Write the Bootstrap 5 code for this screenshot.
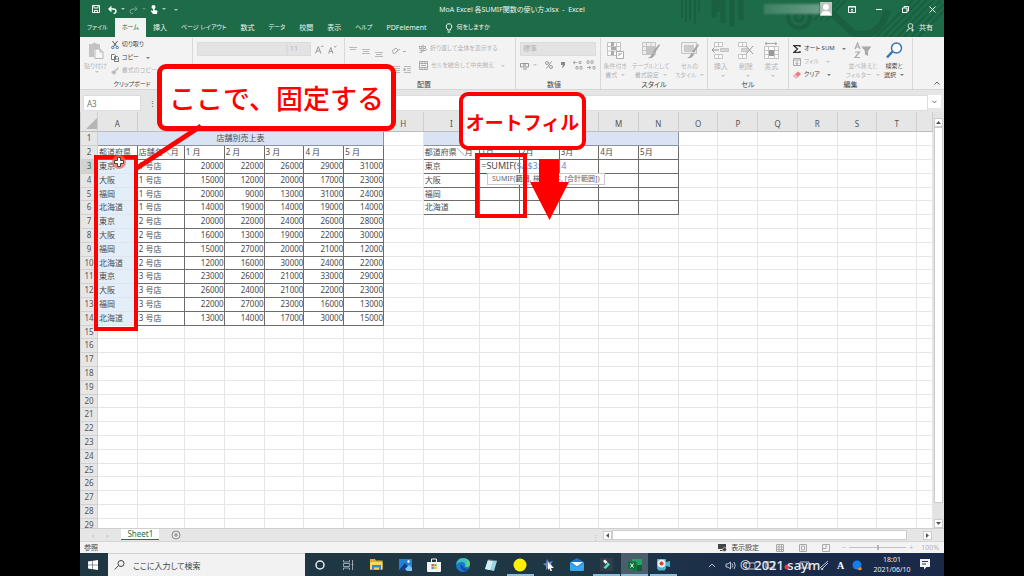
<!DOCTYPE html>
<html lang="ja">
<head>
<meta charset="utf-8">
<meta name="viewport" content="width=device-width, initial-scale=1">
<title>MoA Excel 各SUMIF関数の使い方.xlsx - Excel</title>
<link href="https://cdn.jsdelivr.net/npm/bootstrap@5.3.0/dist/css/bootstrap.min.css" rel="stylesheet">
<script src="https://cdn.jsdelivr.net/npm/bootstrap@5.3.0/dist/js/bootstrap.bundle.min.js"></script>
<style>
  body { background:#000; font-family:"Noto Sans","Noto Sans CJK JP",sans-serif; font-size:7px; line-height:9px; color:#444; padding:0 80px; overflow:hidden; }
  button { border:0; background:none; padding:0; color:inherit; font:inherit; white-space:nowrap; }
  a { color:inherit; text-decoration:none; }
  svg { display:block; flex:none; }
  .ui { font-feature-settings:"palt"; }
  .dim { color:#b4b4b4; }
  .caret::after { content:""; display:inline-block; border:2px solid transparent; border-top-color:currentColor; border-bottom:0; margin-left:4px; vertical-align:1px; opacity:.7; }
  .small-lbl { font-size:6px; }

  /* title bar and tabs */
  .top { background:#1e6b48; color:#eaf3ee; }
  .top-art { right:0; top:0; width:290px; height:37px; z-index:0; }
  .title-row { height:18px; display:grid; grid-template-columns:1fr auto 1fr; }
  .redo { opacity:.4; }
  .user-blur { width:56px; height:10px; background:linear-gradient(90deg,#3d8062,#6b9d86); filter:blur(1px); }
  .win-btns { display:flex; align-items:center; gap:20px; margin-left:16px; }
  .tabs { height:19px; }
  .tabs a { padding:0 7px; line-height:19px; white-space:nowrap; }
  .tabs a.on { background:#f3f3f3; color:#1e6b48; }

  /* ribbon */
  .ribbon { background:#f3f3f3; height:53px; display:grid; grid-template-columns:113fr 152fr 171fr 85fr 107fr 81fr 124fr 31fr; border-bottom:1px solid #d5d5d5; }
  .grp { position:relative; border-right:1px solid #d8d8d8; margin:1px 0; min-width:0; display:flex; flex-direction:column; }
  .grp:last-child { border:0; }
  .grp-body { height:42px; }
  .grp-name { height:9px; text-align:center; color:#444; }
  .big { display:flex; flex-direction:column; align-items:center; line-height:9px; }
  .big svg { margin-bottom:3px; }
  .row13 { height:13px; display:flex; align-items:center; gap:3px; }
  .combo { appearance:none; border:1px solid #dcdcdc; background:#e3e3e3; color:#b4b4b4; height:14px; font-size:7px; padding:0 2px; line-height:12px; }
  .combo-font { width:90px; }
  .combo-size { width:24px; }

  /* formula bar */
  .fbar { background:#e6e6e6; height:22px; padding:5px 3px 0; }
  .fbar input { border:1px solid #ddd; background:#fff; height:16px; font-size:8px; padding:0 3px; color:#777; border-radius:0; }
  .namebox { width:58px; }
  .fgap { width:48px; }

  /* sheet */
  .sheet-area { background:#fff; height:416px; overflow:hidden; }
  .sheet { table-layout:fixed; width:100%; border-collapse:collapse; font-size:8px; line-height:10px; color:#4a4a4a; }
  .sheet th { font-weight:400; text-align:center; padding:0; background:#e6e6e6; border:1px solid #d0d0d0; border-top:0; color:#555; overflow:hidden; }
  .sheet thead tr { height:19px; }
  .sheet thead th { padding-top:5px; border-color:#e6e6e6 #cfcfcf #bdbdbd; }
  .sheet tbody tr { height:14px; }
  .sheet tbody tr:nth-child(5n) { height:13px; }
  .sheet td { padding:0 1px; border:1px solid #e6e6e6; white-space:nowrap; height:inherit; }
  .sheet td.bx { border-color:#6c6c6c; }
  .sheet td.num { text-align:right; padding:0; }
  .sheet td.cap { background:#dae3f3; text-align:center; border-color:#8c93a3; }
  .sheet td.sel { background:#e4eef8; border-color:#dbe6f0; border-right-color:#6c6c6c; }
  .sheet td.march { border-bottom:1px dashed #217346; }
  .sheet th.cur { background:#d2d2d2; color:#217346; }
  .sheet td.edit { font-size:9px; overflow:visible; border-bottom-color:#217346; }
  .edit span { color:#5b8bc9; }
  .vbar { width:11px; background:#e3e3e3; padding:6px 1px 0; }
  .sb { width:9px; height:9px; background:#fff; border:1px solid #ccc; display:grid; place-items:center; flex:none; }
  .thumb { background:#fff; border:1px solid #ccc; }

  /* bottom bars */
  .sheetbar { height:13px; background:#e6e6e6; border-top:1px solid #cfcfcf; }
  .sheetbar .tab1 { margin-left:13px; background:#fff; color:#217346; font-size:8px; line-height:10px; height:11px; width:38px; text-align:center; border-bottom:1px solid #217346; }
  .hbar { width:39%; }
  .hbar .thumb { height:10px; }
  .status { height:12px; background:#f3f3f3; border-top:1px solid #d5d5d5; padding:0 5px 0 4px; }
  .status input { appearance:none; width:57px; height:1px; background:#c2c2c2; margin:0 3px; }
  .status input::-webkit-slider-thumb { appearance:none; width:2px; height:5px; background:#b4b4b4; }
  .zoom-out { margin-left:11px; }
  .taskbar { height:23px; background:linear-gradient(90deg,#1f3743 0%,#1f3644 60%,#1a2c4b 80%,#1a2947 100%); color:#e8edf0; }
  .start { width:28px; }
  .find { width:197px; background:#f2f2f2; border-top:1px solid #d0d0d0; padding-left:6px; gap:8px; color:#444; }
  .find input { border:0; background:none; outline:0; padding:0; font-size:8px; width:150px; font-feature-settings:"palt"; }
  .find input::placeholder { color:#444; opacity:1; }
  .apps { width:372px; padding-left:1px; justify-content:space-between; }
  .apps button { width:27px; height:23px; display:grid; place-items:center; border-bottom:2px solid transparent; border-top:2px solid transparent; }
  .apps .run { border-bottom-color:#8dbcdc; }
  .apps .act { background:#4a5f6b; border-top-color:#4a5f6b; }
  .clock { width:40px; line-height:10px; margin-left:6px; text-align:center; }
  .tray { padding-right:13px; }

  /* annotations lying over the window */
  .note { position:absolute; background:#fff; border:4px solid #f00; border-radius:9px; color:#f00; font-family:"Noto Sans CJK JP",sans-serif; font-weight:700; display:flex; align-items:center; justify-content:center; white-space:nowrap; z-index:5; }
  .note-a { left:77px; top:64px; width:239px; height:67px; font-size:27px; font-weight:500; border-width:5px; }
  .note-b { left:379px; top:92px; width:127px; height:58px; font-size:19px; }
  .frame { position:absolute; border:4px solid #f00; z-index:4; }
  .frame-a { left:14px; top:155px; width:44px; height:176px; }
  .frame-b { left:395px; top:153px; width:52px; height:65px; }
  .marks { position:absolute; left:0; top:0; z-index:6; pointer-events:none; }
  .tip { position:absolute; left:407px; top:173px; height:12px; line-height:10px; background:#fff; border:1px solid #c8c8c8; color:#666; padding:0 4px; z-index:3; white-space:nowrap; }
  .credit { position:absolute; left:660px; bottom:3px; font-size:13px; line-height:15px; font-weight:500; color:#e9edf2; z-index:7; white-space:nowrap; }
</style>
</head>
<body>
<div class="position-relative d-flex flex-column min-vh-100">

  <header class="top position-relative ui">
    <svg class="top-art position-absolute" viewBox="0 0 290 37" fill="none" stroke="#1a6040">
      <path stroke-width="2" d="M28 0V18M32 0V22M36 0V20M41 0V24M45 0V12"/>
      <path stroke-width="5" d="M60 0V18M69 0V23M78 0V27M87 0V20M64 0V12"/>
      <circle cx="145" cy="17" r="11" stroke-width="4"/><circle cx="145" cy="17" r="4" stroke-width="3"/>
      <path stroke-width="7" d="M168 4l30 28q16 8 30-8l6-14"/>
      <path stroke-width="2" d="M160 20l20-20M166 20l20-20M172 20l20-20M222 37l37-37M229 37l37-37M236 37l37-37M243 37l37-37M250 37l37-37M257 37l33-33M264 37l26-26"/>
    </svg>
    <div class="title-row position-relative">
      <div class="d-flex align-items-center ps-2 ms-1">
        <button aria-label="保存"><svg width="8" height="8" viewBox="0 0 8 8" fill="none" stroke="#fff"><path d="M.5.5h7v7h-7zM2 .5v2.500h4v-2.500M2.500 7.500v-2h3v2"/></svg></button>
        <button class="caret ms-2" aria-label="元に戻す"><svg class="d-inline-block" width="9" height="8" viewBox="0 0 9 8" fill="none" stroke="#fff" stroke-width="1.400"><path d="M3.500.5L1 3l2.500 2.500M1 3h4.500q2.500 0 2.500 2.200T5.500 7.500"/></svg></button>
        <button class="caret ms-1 redo" aria-label="やり直し"><svg class="d-inline-block" width="9" height="8" viewBox="0 0 9 8" fill="none" stroke="#fff"><path d="M6 .5L8 3 6 5M8 3H4Q1 3 1 5.500T4 7.500"/></svg></button>
        <button class="caret ms-1" aria-label="タッチ"><svg class="d-inline-block" width="8" height="9" viewBox="0 0 8 9" fill="#fff"><circle cx="3.500" cy="2" r="2"/><path d="M3 2h1.500v3l3 .7-.5 3.300H3L.8 6 1.500 5.300 3 6z"/></svg></button>
        <button class="caret ms-1" aria-label="カスタマイズ"></button>
      </div>
      <div class="align-self-center">MoA Excel 各SUMIF関数の使い方.xlsx &nbsp;-&nbsp; Excel</div>
      <div class="d-flex align-items-center justify-content-end pe-2">
        <span class="user-blur"></span>
        <svg width="12" height="14" viewBox="0 0 12 14"><path fill="#bcc5c1" d="M0 0h12v14H0z"/><circle cx="6" cy="5" r="3" fill="#fff"/><path fill="#fff" d="M1 13q0-4 5-4t5 4z"/></svg>
        <div class="win-btns">
          <button aria-label="リボンの表示"><svg width="8" height="7" viewBox="0 0 8 7" fill="none" stroke="#fff"><path d="M.5.5h7v6h-7zM.5 1h7M4 6V3M2.800 4L4 3l1.200 1"/></svg></button>
          <button aria-label="最小化"><svg width="6" height="6" viewBox="0 0 6 6" stroke="#fff"><path d="M0 3.500h6"/></svg></button>
          <button aria-label="元のサイズ"><svg width="7" height="7" viewBox="0 0 7 7" fill="none" stroke="#fff"><path d="M.5 2h4.500v4.500H.5zM2 2V.5h4.500V5H5"/></svg></button>
          <button aria-label="閉じる"><svg width="7" height="7" viewBox="0 0 7 7" stroke="#fff"><path d="M.5.5l6 6M6.500.5l-6 6"/></svg></button>
        </div>
      </div>
    </div>
    <nav class="tabs d-flex position-relative">
      <a href="#" class="small-lbl">ファイル</a><a href="#" class="on small-lbl">ホーム</a><a href="#">挿入</a><a href="#" class="small-lbl">ページ レイアウト</a><a href="#">数式</a><a href="#" class="small-lbl">データ</a><a href="#">校閲</a><a href="#">表示</a><a href="#" class="small-lbl">ヘルプ</a><a href="#">PDFelement</a>
      <a href="#" class="d-flex align-items-center gap-1 small-lbl ms-1"><svg width="8" height="10" viewBox="0 0 8 10" fill="none" stroke="#fff"><path d="M2.500 7Q2.500 5.500 1.500 4.800 .5 1 4 .8 7.500 1 6.500 4.800 5.500 5.500 5.500 7zM2.700 9h2.600"/></svg>何をしますか</a>
      <a href="#" class="ms-auto d-flex align-items-center gap-1 me-1"><svg width="9" height="9" viewBox="0 0 9 9" fill="none" stroke="#cfe2d8"><circle cx="4.500" cy="3" r="2.400"/><path d="M.8 8.500q.3-3 3.700-3M6.500 5.500v3M5 7h3"/></svg>共有</a>
    </nav>
  </header>

  <section class="ribbon ui" aria-label="リボン">
    <div class="grp">
      <div class="grp-body d-flex gap-1 ps-1">
        <button class="big dim caret pt-1 small-lbl"><svg width="19" height="17" viewBox="0 0 19 17"><path fill="#c3c3c3" d="M3 2h3q2.500-3 5 0h3v5H8v8H3z"/><path fill="#f6f6f6" stroke="#b8b8b8" d="M9 7h5l3 3v6.500H9zM14 7v3h3"/></svg>貼り付け</button>
        <div class="small-lbl">
          <button class="row13"><svg width="8" height="8" viewBox="0 0 8 8" fill="none"><path stroke="#555" d="M1.500 0L5.500 5.500M6.500 0L2.500 5.500"/><circle cx="1.800" cy="6.500" r="1.200" stroke="#3b7dc0"/><circle cx="6.200" cy="6.500" r="1.200" stroke="#3b7dc0"/></svg>切り取り</button>
          <button class="row13 caret"><svg width="8" height="8" viewBox="0 0 8 8" fill="#fff" stroke="#777"><path d="M.5.5h3l1 1v4h-4zM3.500 2.500h3l1 1v4h-4z"/><path stroke="#3b7dc0" d="M4.500 5h2"/></svg>コピー</button>
          <button class="row13 dim"><svg width="8" height="8" viewBox="0 0 8 8" fill="#bbb"><path d="M7.500.2L8 1 5.500 4 4 2.800zM3.500 3L5.500 5 3 8 0 5z"/></svg>書式のコピー</button>
        </div>
      </div>
      <div class="grp-name small-lbl pe-2">クリップボード</div>
    </div>
    <div class="grp">
      <div class="grp-body ps-1 pt-1 dim">
        <div class="d-flex">
          <select class="combo combo-font" aria-label="フォント"><option></option></select>
          <select class="combo combo-size" aria-label="サイズ"><option>11</option></select>
          <button class="ms-1 fs-6 lh-1" aria-label="拡大"><svg width="9" height="9" viewBox="0 0 9 9" fill="none" stroke="#999"><path d="M.5 8.500L3.300 1.500 6 8.500M1.500 6h3.500M6 2L7.300.8 8.500 2"/></svg></button>
          <button class="ms-1" aria-label="縮小"><svg width="9" height="9" viewBox="0 0 9 9" fill="none" stroke="#999"><path d="M.5 8.500L2.800 2.500 5 8.500M1.300 6.500h3M6 1L7.300 2.200 8.500 1"/></svg></button>
        </div>
      </div>
    </div>
    <div class="grp">
      <div class="grp-body d-flex dim pt-1 ps-1">
        <div class="pt-1">
          <svg width="62" height="30" viewBox="0 0 62 30" fill="none" stroke="#b9b9b9"><path d="M0 1.500h8M1 3.500h6M13 3.500h8M14 5.500h6M13 7.500h8M26 6.500h8M27 8.500h6M26 10.500h8M43 20.500h8M46 22.500h5M46 24.500h5M43 26.500h8M55 20.500h7M58 22.500h4M58 24.500h4M55 26.500h7"/><path d="M43 23.500l2-1.500v3zM57 23.500l-2-1.500v3z" fill="#999"/><path d="M43 5l4-3 2 2-4 4zM45 8l6-5M54 5.500h3" stroke="#aaa"/></svg>
        </div>
        <div class="small-lbl ms-2 d-flex flex-column gap-1">
          <button class="row13"><svg width="8" height="9" viewBox="0 0 8 9" fill="none" stroke="#aaa"><path d="M0 2.500h3v2H.5zM4 .5v4h2.500v-2H4M3 6.500h3.500q1 0 1-1.500M4.500 5L3 6.500 4.500 8M.5 6h2v2.500h-2"/></svg>折り返して全体を表示する</button>
          <button class="row13 caret"><svg width="9" height="9" viewBox="0 0 9 9" fill="none" stroke="#aaa"><path d="M.5.5h8v8h-8zM.5 2.500h8M.5 6.500h8M3 0v2M6 0v2M3 7v2M6 7v2M2 4.500h5"/></svg>セルを結合して中央揃え</button>
        </div>
      </div>
      <div class="grp-name pe-2 me-1">配置</div>
    </div>
    <div class="grp">
      <div class="grp-body px-1 pt-1 dim">
        <select class="combo w-100 d-block" aria-label="表示形式"><option>標準</option></select>
        <div class="d-flex align-items-center mt-1 gap-2">
          <button class="caret" aria-label="通貨"><svg class="d-inline-block" width="9" height="8" viewBox="0 0 9 8" fill="none" stroke="#999"><path d="M.5 1.500h8v3.500h-8z"/><circle cx="4.500" cy="3.200" r="1"/><path d="M3 7h4"/></svg></button>
          <button aria-label="パーセント"><svg width="8" height="8" viewBox="0 0 8 8" fill="none" stroke="#999"><circle cx="2" cy="2" r="1.500"/><circle cx="6" cy="6" r="1.500"/><path d="M6.500.5l-5 7"/></svg></button>
          <button aria-label="桁区切り"><svg width="4" height="6" viewBox="0 0 4 6" fill="#888"><path d="M0 0h4v3L1.500 6 1 5.500 2 3H0z"/></svg></button>
          <svg width="24" height="10" viewBox="0 0 24 10" fill="none" stroke="#aaa"><path d="M0 2.500h4M2 .8L0 2.500 2 4M6 1.500h2v2H6zM3 6.500h2v2.500H3zM7 6.500h2v2.500H7zM14 .8h2v2.500h-2zM18 .8h2v2.500h-2zM14 7.500h4M16 6l2 1.500L16 9M20 6.500h2v2.500h-2z"/></svg>
        </div>
      </div>
      <div class="grp-name pe-2">数値</div>
    </div>
    <div class="grp">
      <div class="grp-body d-flex justify-content-around dim pt-1 small-lbl">
        <button class="big"><svg width="18" height="17" viewBox="0 0 18 17"><path fill="#fafafa" stroke="#c4c4c4" d="M1.500.5h13v13h-13zM1 4.500h13M1 9h13M10.500 0v13"/><path fill="#aaa" d="M5 0h3v4H5zM5 5h5v3H5zM5 9h3v4H5z"/><path fill="#fff" stroke="#aaa" d="M10.500 9.500h7v7h-7zM12 14l4-3M12 12h3"/></svg>条件付き<span class="caret">書式</span></button>
        <button class="big"><svg width="18" height="17" viewBox="0 0 18 17"><path fill="#eee" stroke="#c4c4c4" d="M.5.500h13v12H.5zM0 4.500h13M0 8.500h13M4.500 0v12M9 0v12"/><path fill="#c4c4c4" d="M5 5h8v8H5z"/><path fill="#a5a5a5" d="M17 2l1 1-5 8-2-1.500zM10.500 10.500l2.500 2Q11 17 6 16q3-1 4.500-5.500z"/></svg>テーブルとして<span class="caret">書式設定</span></button>
        <button class="big"><svg width="18" height="17" viewBox="0 0 18 17"><path fill="#eee" stroke="#c4c4c4" d="M.5.500h15v11H.5z"/><path fill="#ccc" d="M3 3h10v7H3z"/><path fill="#a5a5a5" d="M17 2l1 1-5 8-2-1.500zM10.500 10.500l2.500 2Q11 17 6 16q3-1 4.500-5.500z"/></svg>セルの<span class="caret">スタイル</span></button>
      </div>
      <div class="grp-name">スタイル</div>
    </div>
    <div class="grp">
      <div class="grp-body d-flex justify-content-around dim pe-1 pt-1">
        <button class="big"><svg width="17" height="17" viewBox="0 0 17 17" fill="#fafafa" stroke="#c4c4c4"><path d="M2.500.5h8v4h-8zM6.500.5v4M2.500 12.500h8v4h-8zM6.500 12v4"/><path fill="#d5d5d5" d="M8.500 6.500h8v3h-8z"/><path stroke="#999" d="M0 8h7M2.500 5.500L0 8l2.500 2.500" fill="none"/></svg>挿入<span class="caret"></span></button>
        <button class="big"><svg width="17" height="17" viewBox="0 0 17 17" fill="#fafafa" stroke="#c4c4c4"><path d="M1.500.5h8v4h-8zM5.500.5v4M1.500 12.500h8v4h-8zM5.500 12v4"/><path fill="#d5d5d5" d="M4.500 6.500h6v3h-6z"/><path stroke="#999" d="M9 4l7 8M16 4l-7 8" fill="none"/></svg>削除<span class="caret"></span></button>
        <button class="big"><svg width="17" height="17" viewBox="0 0 17 17" fill="#fafafa" stroke="#c4c4c4"><path d="M1.500 4.500h14v12h-14zM1 8.500h14M1 12.500h14M5.500 4v12M11.500 4v12"/><path stroke="#aaa" d="M2 1.500h12M4 0L2 1.500 4 3M12 0l2 1.500L12 3" fill="none"/><path fill="#999" stroke="none" d="M6 8h5v6H6z"/></svg>書式<span class="caret"></span></button>
      </div>
      <div class="grp-name">セル</div>
    </div>
    <div class="grp">
      <div class="grp-body d-flex px-1 small-lbl">
        <div>
          <button class="row13 caret mt-1"><svg width="8" height="8" viewBox="0 0 8 8" fill="none" stroke="#333" stroke-width="1.300"><path d="M7 2V.7H1L4.500 4 1 7.300h6V6"/></svg>オート SUM</button>
          <button class="row13 caret dim"><svg width="8" height="8" viewBox="0 0 8 8" fill="none" stroke="#aaa"><path d="M.5.500h7v7h-7zM.5 2h7M4 3v3.500M2.500 5L4 6.500 5.500 5"/></svg>フィル</button>
          <button class="row13 caret"><svg width="8" height="8" viewBox="0 0 8 8"><path fill="#e8788a" d="M5 .5L8 3 3.500 7.500 0 5z"/><path fill="#f4b5be" d="M2 3l3.500 3L3.500 7.500 0 5z"/></svg>クリア</button>
        </div>
        <button class="big dim pt-1 ms-auto"><svg width="17" height="17" viewBox="0 0 17 17" fill="none" stroke="#aaa" stroke-width="1.200"><path d="M1 7l2.500-6L6 7M2 5h3M1 10h4.500L1 15.500h5"/><path fill="#aaa" d="M8.500 5h8L13.500 9v4l-2-1V9z"/></svg>並べ替えと<span class="caret">フィルター</span></button>
        <button class="big pt-1 ms-1 me-1"><svg width="17" height="17" viewBox="0 0 17 17" fill="#fff" stroke="#3576b8"><path stroke-width="2.500" d="M6.500 9.500L1 15.500"/><circle cx="10.500" cy="6" r="5" stroke-width="1.500"/></svg>検索と<span class="caret">選択</span></button>
      </div>
      <div class="grp-name">編集</div>
    </div>
    <div class="grp"><button class="mt-auto ms-auto me-1 mb-1" aria-label="リボンを折りたたむ"><svg width="6" height="4" viewBox="0 0 6 4" fill="none" stroke="#666"><path d="M.5 3.500L3 1l2.500 2.500"/></svg></button></div>
  </section>

  <div class="fbar d-flex">
    <input class="namebox" value="A3" aria-label="名前ボックス">
    <span class="align-self-center ps-2">⋮</span>
    <span class="fgap"></span>
    <input class="flex-grow-1" value="" aria-label="数式バー">
    <button class="bg-white px-1 mb-1" aria-label="数式バーの展開"><svg width="5" height="4" viewBox="0 0 5 4" fill="none" stroke="#666"><path d="M.5.800l2 2 2-2"/></svg></button>
  </div>

  <main class="sheet-area d-flex flex-grow-1">
    <div class="flex-grow-1">
      <table class="sheet"><colgroup id="cols"></colgroup><thead><tr id="head"></tr></thead><tbody id="rows"></tbody></table>
    </div>
    <div class="vbar d-flex flex-column">
      <button class="sb" aria-label="上へ"><svg width="5" height="3" viewBox="0 0 5 3"><path fill="#555" d="M0 3h5L2.500 0z"/></svg></button>
      <div class="thumb flex-grow-1 mb-3"></div>
      <button class="sb" aria-label="下へ"><svg width="5" height="3" viewBox="0 0 5 3"><path fill="#555" d="M0 0h5L2.500 3z"/></svg></button>
    </div>
  </main>

  <div class="sheetbar d-flex">
    <button class="dim ps-2 ms-1" aria-label="前へ">‹</button><button class="dim ps-2 ms-1" aria-label="次へ">›</button>
    <a href="#" class="tab1">Sheet1</a>
    <button class="ps-2 ms-1" aria-label="新しいシート"><svg width="10" height="10" viewBox="0 0 10 10" fill="none" stroke="#888"><circle cx="5" cy="5" r="4"/><path d="M3 5h4M5 3v4"/></svg></button>
    <span class="ms-auto dim pe-1 pt-1">⋮</span>
    <div class="hbar d-flex pe-2 me-1 align-items-center">
      <button class="sb" aria-label="左へ"><svg width="3" height="5" viewBox="0 0 3 5"><path fill="#555" d="M3 0v5L0 2.500z"/></svg></button>
      <div class="thumb flex-grow-1"></div>
      <button class="sb ms-3" aria-label="右へ"><svg width="3" height="5" viewBox="0 0 3 5"><path fill="#555" d="M0 0v5L3 2.500z"/></svg></button>
    </div>
  </div>

  <div class="status d-flex align-items-center ui">
    <span>参照</span>
    <button class="ms-auto d-flex gap-1 align-items-center"><svg width="9" height="8" viewBox="0 0 9 8" fill="#444"><path d="M0 0h8v5H0zM2 6h3v1H2z"/><circle cx="6.500" cy="5.500" r="2" stroke="#f3f3f3" stroke-width=".5"/></svg>表示設定</button>
    <svg class="ms-3" width="56" height="8" viewBox="0 0 56 8" fill="none" stroke="#aaa"><path d="M1.500.500h7v7h-7zM1 3h7M1 5.500h7M4 0v7M6.500 0v7M24.500.500h7v7h-7zM26.500 2h3v4h-3zM47.500.500h7v7h-7zM47 4.500h4V0"/></svg>
    <span class="dim zoom-out">−</span><input type="range" aria-label="ズーム"><span class="dim">+</span><span class="dim ms-2">100%</span>
  </div>

  <footer class="taskbar d-flex align-items-stretch">
    <button class="start px-2" aria-label="スタート"><svg width="10" height="10" viewBox="0 0 10 10" fill="#fff"><path d="M0 1.500l4.500-.7v4H0zM5 .7l5-.7v4.800H5zM0 5.300h4.500v4L0 8.600zM5 5.300h5V10l-5-.7z"/></svg></button>
    <label class="find d-flex align-items-center"><svg width="11" height="10" viewBox="0 0 11 10" fill="none" stroke="#444"><circle cx="7" cy="3.500" r="3"/><path d="M4.500 5.500L.8 9.500"/></svg><input placeholder="ここに入力して検索" aria-label="検索"></label>
    <div class="apps d-flex">
      <button aria-label="Cortana"><svg width="10" height="10" viewBox="0 0 10 10"><circle cx="5" cy="5" r="4" fill="none" stroke="#e8edf0" stroke-width="1.500"/></svg></button>
      <button aria-label="タスクビュー"><svg width="11" height="10" viewBox="0 0 11 10" fill="none" stroke="#98a5ac"><path d="M.5 0v2h6V0M.5 3.500h6v3h-6zM.5 10V8h6v2M9.500 0v10M8.500 4.500h2"/></svg></button>
      <button aria-label="エクスプローラー"><svg width="13" height="11" viewBox="0 0 13 11"><path fill="#e9a825" d="M0 0h5l1 1.500h6.500V11H0z"/><path fill="#ffd561" d="M0 3h12.500v7H0z"/><path fill="#3f86c9" d="M2 6h9v5H9V8.500H4V11H2z"/></svg></button>
      <button aria-label="フォト"><svg width="13" height="12" viewBox="0 0 13 12"><path fill="#2282d8" d="M0 0h13v12H0z"/><path fill="#153f80" d="M0 11l6-7 7 8H0z"/><path fill="#7ec3f5" d="M6 10l4-4 3 3v3H8z"/><circle cx="9.500" cy="2.500" r="1.200" fill="#fff"/></svg></button>
      <button aria-label="ストア"><svg width="14" height="14" viewBox="0 0 14 14"><path fill="none" stroke="#f4f4f4" d="M4.500 4V1h5v3"/><path fill="#f4f4f4" d="M0 4h14v9q0 1-1 1H1q-1 0-1-1z"/><path fill="#e8502e" d="M4.500 6h2.300v2.300H4.500z"/><path fill="#7cb82f" d="M7.300 6h2.300v2.300H7.300z"/><path fill="#2e9fe0" d="M4.500 8.800h2.300v2.300H4.500z"/><path fill="#f5b820" d="M7.300 8.800h2.300v2.300H7.300z"/></svg></button>
      <button aria-label="Edge"><svg width="14" height="14" viewBox="0 0 14 14"><circle cx="7" cy="7" r="7" fill="#1678cf"/><path fill="#39bfc4" d="M0 7Q1 0 7 0q7 .5 7 6-.5 3.500-4 3-2-.5-1-2Q9 4 6 4 2 4 0 7z"/><path fill="#6fd06a" d="M9 .4Q14 2 14 6.500 13 9.500 9.500 9 13 5 9 .4z"/><path fill="#0f4c9c" d="M5 6Q3 11 9 13q3-.5 4-2.500-5 1.500-8-4.500z"/></svg></button>
      <button aria-label="メモ帳"><svg width="12" height="12" viewBox="0 0 12 12"><path fill="#9bd4e4" d="M3 1l9 1-3 10-9-2z"/><path fill="#d6f0f5" d="M3 1l5 .5L5 11 0 10z"/><path stroke="#557a88" d="M3 .8l9 1"/></svg></button>
      <button class="run" aria-label="録画"><svg width="14" height="14" viewBox="0 0 14 14"><circle cx="7" cy="7" r="6.500" fill="#fff200"/></svg></button>
      <button aria-label="ツール"><svg width="12" height="12" viewBox="0 0 12 12"><path fill="#6d88c8" d="M4 0l2 3 4-1-2 3 2 4-4-1-3 3V7L0 5l3-1z"/><path fill="#fff" d="M5 3l6 6H8l1 3-1.500.3-1-2.800L5 11z"/></svg></button>
      <button aria-label="メール"><svg width="14" height="13" viewBox="0 0 14 13"><path fill="#1672c4" d="M0 4l7-4 7 4v8q0 1-1 1H1q-1 0-1-1z"/><path fill="#f5f9fc" d="M1 4h12L7 8.500z"/><path fill="#35a7ec" d="M0 4.500l7 4.500 7-4.500V12l-1 1H1l-1-1z"/></svg></button>
      <button class="run" aria-label="Filmora"><svg width="13" height="13" viewBox="0 0 13 13"><path fill="#333f48" d="M0 0h13v13H0z"/><path fill="#f4f4f4" d="M3 3l2-1.500L7.500 4 5.500 6z"/><path fill="#4de0c0" d="M7.500 4L10 6.500 5.500 11 3.500 9.500 6.500 6.500z"/></svg></button>
      <button class="run act" aria-label="Excel"><svg width="14" height="12" viewBox="0 0 14 12"><path fill="#21a366" d="M4 0h10v12H4z"/><path fill="#107c41" d="M4 3h5v9H4z"/><path fill="#185c37" d="M9 6h5v6H9z"/><path fill="#0f703b" d="M0 2.500h8v7.500H0z"/><path stroke="#fff" d="M2.500 4.500l3 4M5.500 4.500l-3 4"/></svg></button>
      <button class="run" aria-label="カメラ"><svg width="14" height="12" viewBox="0 0 14 12"><path fill="#48b4cf" d="M1 0h9v3l4-1v6l-4-1v3H1z"/><circle cx="5.500" cy="4.500" r="4" fill="#e8f2f5"/><circle cx="5.500" cy="4.500" r="2" fill="#e23d2f"/><path fill="#48b4cf" d="M2 10h7v1.500H2z"/></svg></button>
    </div>
    <div class="tray d-flex align-items-center ms-auto">
      <svg width="158" height="12" viewBox="0 0 158 12" fill="none" stroke="#b8c4cf"><path d="M1 8l3-3 3 3M18 5h2l2.500-2v7L20 8h-2zM24 4.500q1.500 2 0 4M26 3q2.500 3.500 0 7" /><path d="M38 4h9v6h-9zM58 3h8v6h-8zM92 3h9v6h-9zM112 9l8-7M114 10l6-6"/><circle cx="79" cy="8" r="2.500" fill="#e43d3d" stroke="none"/><circle cx="149" cy="6" r="4.500" fill="#147fe8" stroke="none"/><path d="M149 10l4-2 1 2-2 1.500z" fill="#e88a2c" stroke="none"/><text x="129" y="10" font-family="Liberation Serif" font-size="10" font-weight="700" fill="#fff" stroke="none">A</text></svg>
      <div class="clock">18:01<br>2021/06/10</div>
      <svg class="ms-2" width="11" height="11" viewBox="0 0 11 11"><path fill="#f2f4f6" d="M0 0h10v8H6.500L4 10.500V8H0z"/><path stroke="#26394f" d="M2 2.500h6M2 5h4"/></svg>
    </div>
  </footer>

  <div class="tip">SUMIF(<b>範囲</b>, 検索条件, [合計範囲])</div>
  <div class="frame frame-a"></div>
  <div class="frame frame-b"></div>
  <div class="note note-a">ここで、固定する</div>
  <div class="note note-b">オートフィル</div>
  <svg class="marks" width="600" height="240" viewBox="0 0 600 240">
    <path d="M121 126L57 168" stroke="#f00" stroke-width="5"/>
    <circle cx="39" cy="162" r="7" fill="#f0685f" opacity=".75"/>
    <path d="M37.500 157.500h3v3h3v3h-3v3h-3v-3h-3v-3h3z" fill="#fff" stroke="#444"/>
    <path d="M459 159h20v23h10l-19.500 38L450 182h9z" fill="#f00"/>
  </svg>
  <div class="credit">© 2021 saym.</div>
</div>

<script>
  // Column widths as a share of the sheet: row heads, then A to U.
  const shares = [2, 4.66, 5.53, 4.68, 4.68, 4.68, 4.68, 4.66, 4.66, 6.64].concat(Array(11).fill(4.66));
  document.getElementById('cols').innerHTML = shares.map(s => `<col style="width:${s}%">`).join('') + '<col>';
  const letters = 'ABCDEFGHIJKLMNOPQRST'.split('');
  document.getElementById('head').innerHTML = '<th><svg class="ms-auto" width="11" height="11" viewBox="0 0 11 11"><path fill="#b5b5b5" d="M11 0v11H0z"/></svg></th>' +
    letters.map(l => `<th scope="col">${l}</th>`).join('') + '<th></th>';

  const cities = ['東京', '大阪', '福岡', '北海道'];
  const sales = [
    [20000,22000,26000,29000,31000],[15000,12000,20000,17000,23000],[20000,9000,13000,31000,24000],[14000,19000,14000,19000,14000],
    [20000,22000,24000,26000,28000],[16000,13000,19000,22000,30000],[15000,27000,20000,21000,12000],[12000,16000,30000,24000,22000],
    [23000,26000,21000,33000,29000],[26000,24000,21000,22000,23000],[22000,27000,23000,16000,13000],[13000,14000,17000,30000,15000]];
  const blank = n => '<td></td>'.repeat(n);
  const cells = (list, cls) => list.map(v => `<td class="${cls}">${v}</td>`).join('');
  let html = '';
  for (let r = 1; r <= 29; r++) {
    html += `<tr><th scope="row" class="${r === 3 ? 'cur' : ''}">${r}</th>`;
    if (r === 1) {
      html += '<td class="cap" colspan="7">店舗別売上表</td>' + blank(1) + '<td class="cap" colspan="6"></td>' + blank(7);
    } else if (r === 2) {
      html += cells(['都道府県', '店舗名＼月', '1 月', '2 月', '3 月', '4 月', '5 月'], 'bx') + blank(1) +
        cells(['都道府県＼月', '1月', '2月', '3月', '4月', '5月'], 'bx') + blank(7);
    } else if (r <= 14) {
      const i = r - 3;
      html += `<td class="sel${r === 14 ? ' march' : ''}">${cities[i % 4]}</td><td class="bx">${Math.floor(i / 4) + 1} 号店</td>` + cells(sales[i], 'bx num') + blank(1);
      if (r === 3) html += '<td class="bx">東京</td><td class="bx edit">=SUMIF(<span>$A$3:$A$14</span></td>' + cells(['', '', '', ''], 'bx') + blank(7);
      else if (r <= 6) html += cells([cities[i], '', '', '', '', ''], 'bx') + blank(7);
      else html += blank(13);
    } else html += blank(21);
    html += '</tr>';
  }
  document.getElementById('rows').innerHTML = html;
</script>
</body>
</html>
